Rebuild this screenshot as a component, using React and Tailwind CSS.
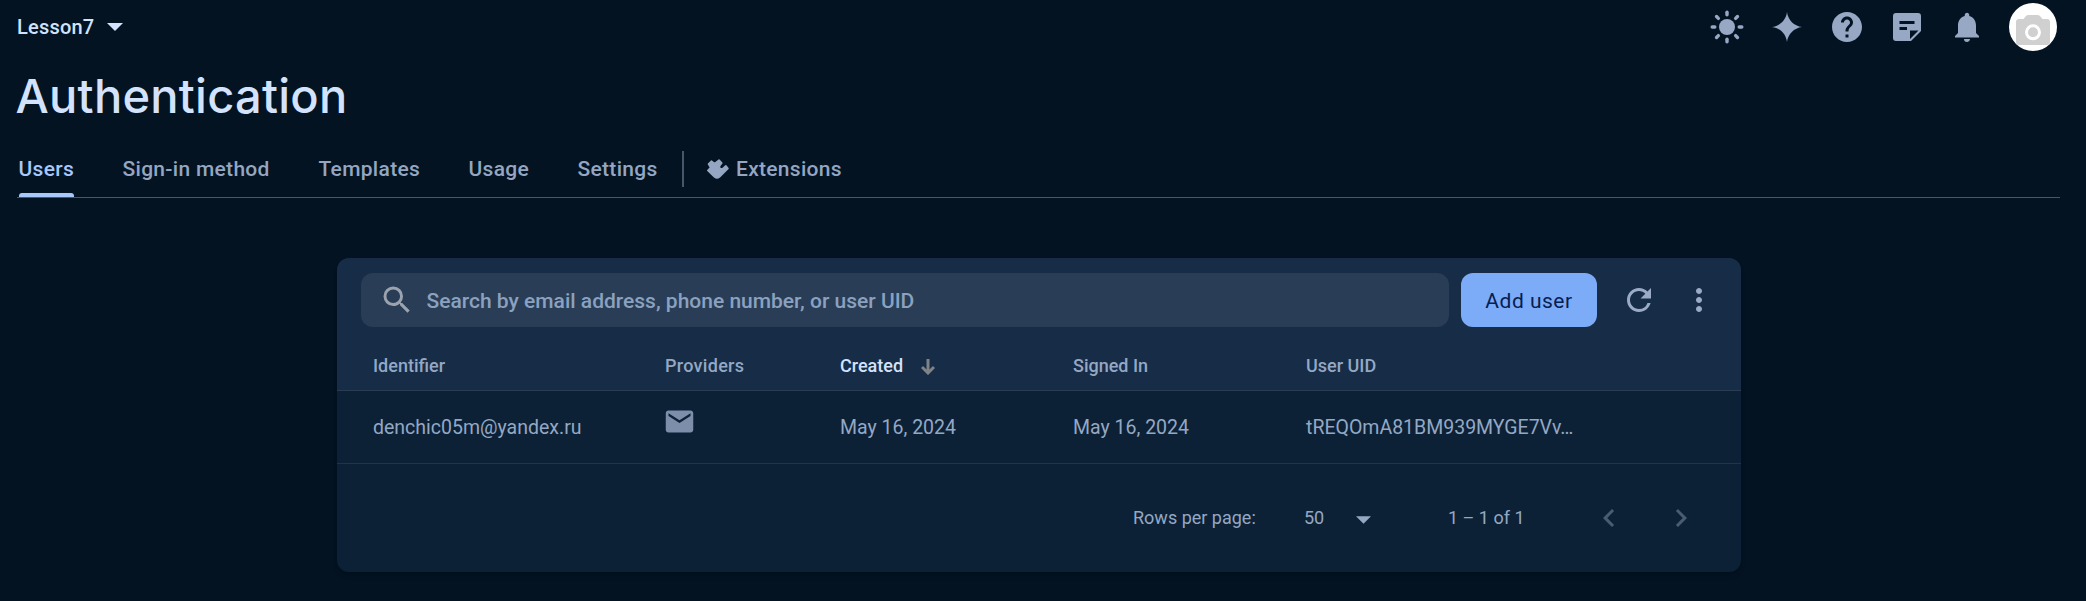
import React from "react";
import {
  MdHelp,
  MdNotifications,
  MdSearch,
  MdRefresh,
  MdMoreVert,
  MdEmail,
  MdChevronLeft,
  MdChevronRight,
} from "react-icons/md";

const TABS = [
  { label: "Users", width: "w-[55px]", active: true },
  { label: "Sign-in method", width: "w-[147px]" },
  { label: "Templates", width: "w-[101px]" },
  { label: "Usage", width: "w-[60px]" },
  { label: "Settings", width: "w-[81px]" },
];

function Caret({ className }) {
  return (
    <svg viewBox="0 0 16 8" className={className} fill="currentColor">
      <path d="M0 0h16L8 8z" />
    </svg>
  );
}

function SunIcon() {
  return (
    <svg viewBox="0 0 36 36" className="size-9" fill="currentColor">
      <circle cx="18" cy="18" r="8" />
      <g stroke="currentColor" strokeWidth="3.4" strokeLinecap="round">
        {[0, 45, 90, 135, 180, 225, 270, 315].map((angle) => (
          <path key={angle} d="M18 3.2v2.6" transform={`rotate(${angle} 18 18)`} />
        ))}
      </g>
    </svg>
  );
}

function SparkIcon() {
  return (
    <svg viewBox="0 0 36 36" className="size-9" fill="currentColor">
      <path d="M18 3C19 11 25 17 33 18C25 19 19 25 18 33C17 25 11 19 3 18C11 17 17 11 18 3z" />
    </svg>
  );
}

function NoteIcon() {
  return (
    <svg viewBox="0 0 36 36" className="size-9" fill="currentColor" fillRule="evenodd">
      <path d="M7 4H29Q32 4 32 7V22L22 32H7Q4 32 4 29V7Q4 4 7 4zM10.500 12V15H25.500V12zM10.500 18V21H18V18zM21 21.500V30L29.500 21.500z" />
    </svg>
  );
}

function CameraIcon() {
  return (
    <svg viewBox="0 0 48 48" className="size-12">
      <path
        fill="#d0d0d0"
        d="M10 16H14.500L17 13Q18 12 19.500 12H28.500Q30 12 31 13L33.500 16H38Q41 16 41 19V39Q41 42 38 42H10Q7 42 7 39V19Q7 16 10 16z"
      />
      <circle cx="24" cy="29.300" r="6.500" fill="none" stroke="#fff" strokeWidth="3" />
    </svg>
  );
}

function ExtensionIcon() {
  return (
    <svg viewBox="0 0 24 24" className="size-6" fill="currentColor" stroke="currentColor" strokeWidth="1.6" strokeLinejoin="round">
      <path d="M2.500 6L5.500 3L8 5L9.500 4.800L13 2L15.800 5L13.500 8L13.800 10.500L16.500 10.800L19.800 7.800L22 10.500L13.500 19Q11 21 8.500 19L1.800 12.500L4.600 9.500z" />
    </svg>
  );
}

function SortArrow() {
  return (
    <svg viewBox="0 0 14 16" className="ml-[18px] mt-[3px] h-4 w-3.5" fill="none" stroke="#7f8286" strokeWidth="3">
      <path d="M7 0v14M1 8l6 6 6-6" />
    </svg>
  );
}

function Header() {
  return (
    <header className="flex h-[54px] items-center pl-[17px] pr-[29px]">
      <span className="w-[80px] whitespace-nowrap text-[20px] font-medium tracking-[0.2px] text-[#d3e3fd]">Lesson7</span>
      <Caret className="ml-[10px] h-2 w-4 text-[#d3e3fd]" />
      <div className="ml-auto flex items-center gap-6 text-[#97a8c5]">
        <SunIcon />
        <SparkIcon />
        <MdHelp className="size-9" />
        <NoteIcon />
        <MdNotifications className="size-9" />
        <div className="size-12 rounded-full bg-white">
          <CameraIcon />
        </div>
      </div>
    </header>
  );
}

function Tabs() {
  return (
    <nav className="ml-[17px] mr-[26px] flex h-[48px] items-stretch border-b border-[#46566b] pl-[2px] text-[21px] font-medium tracking-[0.3px] text-[#94a6c1]">
      <div className="flex gap-[49px]">
        {TABS.map((tab) => (
          <div
            key={tab.label}
            className={`${tab.width} flex flex-col whitespace-nowrap ${tab.active ? "text-[#a8c7fa]" : ""}`}
          >
            <span className="-ml-[0.5px] flex h-[40px] items-center">{tab.label}</span>
            {tab.active && <span className="mt-[4px] h-1 shrink-0 rounded-t-[3px] bg-[#a8c7fa]" />}
          </div>
        ))}
      </div>
      <div className="ml-[23px] mt-[1px] h-9 w-[2px] bg-[#46566b]" />
      <div className="ml-[22px] flex h-[40px] items-center gap-[6px]">
        <ExtensionIcon />
        <span>Extensions</span>
      </div>
    </nav>
  );
}

function Toolbar() {
  return (
    <div className="flex h-[84px] items-center pl-[24px]">
      <div className="flex h-[54px] w-[1088px] items-center rounded-xl bg-[#293d56] pl-[18px]">
        <MdSearch className="size-9 text-[#9ba3ae]" />
        <span className="ml-[11.5px] whitespace-nowrap pt-[3px] text-[21px] font-medium text-[#8ba1c0]">
          Search by email address, phone number, or user UID
        </span>
      </div>
      <div className="ml-3 flex h-[54px] w-[136px] items-center justify-center rounded-xl bg-[#7cacf8] pt-[3px] text-[21px] tracking-[0.5px] text-[#062052]">
        Add user
      </div>
      <MdRefresh className="ml-[23.500px] size-9 text-[#9aaac7]" />
      <MdMoreVert className="ml-[24px] size-9 text-[#9aaac7]" />
    </div>
  );
}

function UsersCard() {
  return (
    <section className="ml-[337px] h-[314px] w-[1404px] overflow-hidden rounded-xl bg-[#0d2136] text-[#94a8c4] shadow-md">
      <div className="h-[133px] border-b border-[#2a3d53] bg-[#172c47]">
        <Toolbar />
        <div className="flex h-[46px] items-center pl-[36px] text-[18px] font-medium">
          <span className="w-[292px]">Identifier</span>
          <span className="w-[175px] tracking-[0.3px]">Providers</span>
          <span className="flex w-[233px] items-center text-[#d3e3fd]">
            Created
            <SortArrow />
          </span>
          <span className="w-[233px]">Signed In</span>
          <span>User UID</span>
        </div>
      </div>
      <div className="flex h-[73px] items-center border-b border-[#20344a] pl-[36px] text-[19.5px]">
        <span className="w-[290px] pt-[2px]">denchic05m@yandex.ru</span>
        <span className="w-[177px]">
          <MdEmail className="mb-[11px] size-[33px] text-[#7c8ea9]" />
        </span>
        <span className="w-[233px] pt-[2px]">May 16, 2024</span>
        <span className="w-[233px] pt-[2px]">May 16, 2024</span>
        <span className="pt-[2px]">tREQOmA81BM939MYGE7Vv…</span>
      </div>
      <div className="flex h-[107px] items-center pl-[796px] text-[18px]">
        <span className="w-[171px]">Rows per page:</span>
        <span className="w-[52px]">50</span>
        <Caret className="mt-1 h-[8px] w-[15px]" />
        <span className="ml-[77px] w-[143px]">1 – 1 of 1</span>
        <MdChevronLeft className="size-9 text-[#4a5c73]" />
        <MdChevronRight className="ml-[36px] size-9 text-[#4a5c73]" />
      </div>
    </section>
  );
}

export default function App() {
  return (
    <div className="flex h-[601px] w-[2086px] flex-col overflow-hidden bg-[#031322] font-['Roboto',sans-serif]">
      <Header />
      <h1 className="flex h-[96px] items-center pb-[12px] pl-[15.5px] font-['Inter',sans-serif] text-[47px] font-medium tracking-[0.25px] text-[#d3e3fd]">
        Authentication
      </h1>
      <Tabs />
      <main className="pt-[60px]">
        <UsersCard />
      </main>
    </div>
  );
}
